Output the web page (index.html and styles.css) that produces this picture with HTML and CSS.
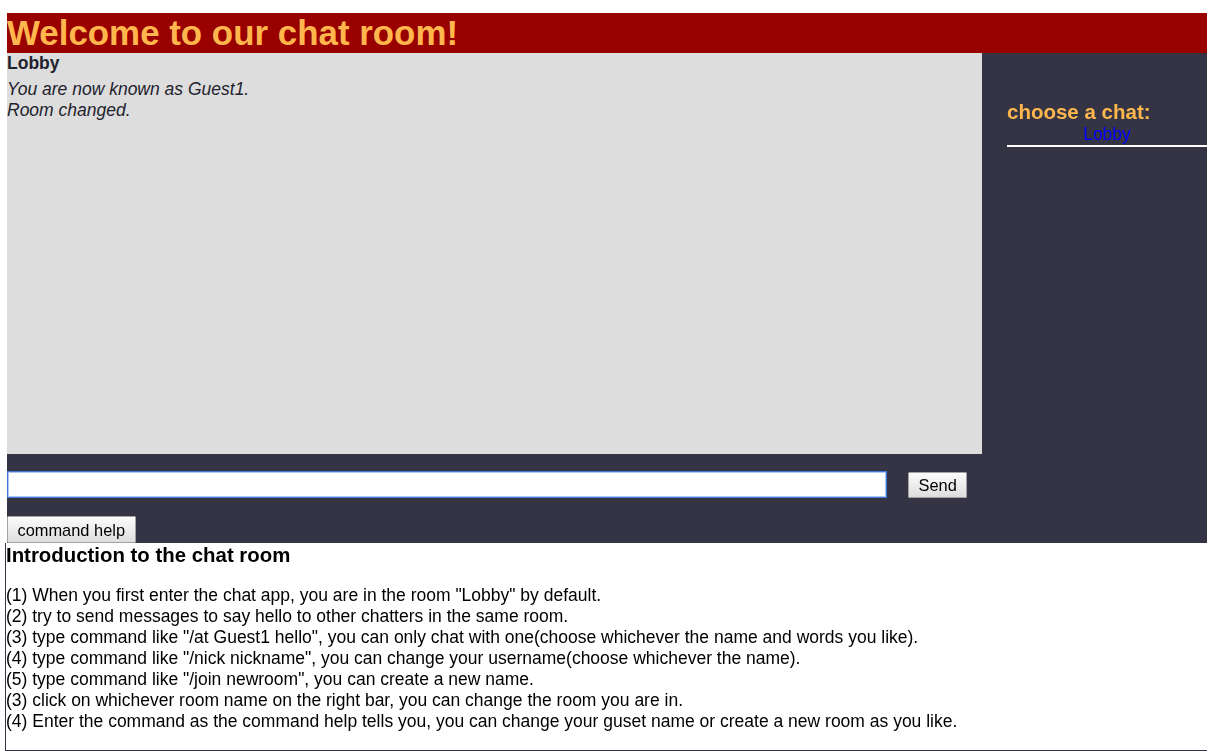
FILE: index.html
```html
<!DOCTYPE html>
<html lang="en">
<head>
<meta charset="utf-8">
<title>Chat room</title>
<link rel="stylesheet" href="styles.css">
</head>
<body>
<div class="page">
  <header class="banner">
    <h1 class="banner-title">Welcome to our chat room!</h1>
  </header>
  <main class="chat">
    <section class="chat-main">
      <div class="room">
        <div class="room-name">Lobby</div>
        <div class="messages">
          <div class="msg system">You are now known as Guest1.</div>
          <div class="msg system">Room changed.</div>
        </div>
      </div>
      <form class="send-form" onsubmit="return false;">
        <div class="send-row">
          <input class="send-input" type="text" autofocus>
          <button class="btn send-btn" type="submit">Send</button>
        </div>
        <button class="btn help-btn" type="button">command help</button>
      </form>
    </section>
    <aside class="sidebar">
      <h3 class="sidebar-title">choose a chat:</h3>
      <div class="room-list">
        <a class="room-link" href="#">Lobby</a>
      </div>
    </aside>
  </main>
  <section class="intro">
    <h3 class="intro-title">Introduction to the chat room</h3>
    <div class="intro-list">
      <div>(1) When you first enter the chat app, you are in the room "Lobby" by default.</div>
      <div>(2) try to send messages to say hello to other chatters in the same room.</div>
      <div>(3) type command like "/at Guest1 hello", you can only chat with one(choose whichever the name and words you like).</div>
      <div>(4) type command like "/nick nickname", you can change your username(choose whichever the name).</div>
      <div>(5) type command like "/join newroom", you can create a new name.</div>
      <div>(3) click on whichever room name on the right bar, you can change the room you are in.</div>
      <div>(4) Enter the command as the command help tells you, you can change your guset name or create a new room as you like.</div>
    </div>
  </section>
</div>
</body>
</html>
```

FILE: styles.css
```css
html, body {
  margin: 0;
  padding: 0;
  overflow: hidden;
  background: #ffffff;
}

body {
  font-family: "Liberation Sans", Arial, sans-serif;
  font-size: 17.5px;
  color: #000;
}

.page {
  margin: 13px 0 0 7px;
  width: 1200px;
}

.banner {
  background: #990000;
  height: 40px;
}

.banner-title {
  margin: 0;
  font-size: 34.9px;
  line-height: 40px;
  font-weight: bold;
  color: #ffb74d;
  white-space: nowrap;
}

.chat {
  display: grid;
  grid-template-columns: 975px 225px;
  background: #353445;
}

.chat-main {
  display: flex;
  flex-direction: column;
}

.room {
  background: #dddddd;
  height: 401px;
  color: #22222e;
}

.room-name {
  font-weight: bold;
  line-height: 21px;
  margin-bottom: 5px;
}

.msg {
  font-style: italic;
  line-height: 21px;
}

.send-form {
  margin: 0;
  padding-top: 17px;
  display: flex;
  flex-direction: column;
  align-items: flex-start;
  gap: 18px;
}

.send-row {
  display: flex;
  align-items: center;
  gap: 21px;
}

.send-input {
  box-sizing: border-box;
  width: 880px;
  height: 27px;
  margin: 0;
  padding: 0 2px;
  border: 1px solid #3f7bd6;
  box-shadow: inset 0 0 0 1px #a9c7f2;
  background: #fff;
  font-family: "Liberation Sans", Arial, sans-serif;
  font-size: 16.5px;
  outline: none;
  caret-color: #000;
}

.btn {
  box-sizing: border-box;
  margin: 0;
  padding: 0 9.5px;
  border: 1px solid #a3a3a3;
  border-radius: 1px;
  background: linear-gradient(#fbfbfb, #dedede);
  font-family: "Liberation Sans", Arial, sans-serif;
  font-size: 16.4px;
  color: #000;
  line-height: 20px;
}

.send-btn {
  height: 26px;
  margin-top: 1px;
}

.help-btn {
  height: 27px;
}

.sidebar {
  padding: 47px 0 0 25px;
}

.sidebar-title {
  margin: 0;
  font-size: 20.5px;
  font-weight: bold;
  color: #ffb74d;
  line-height: 24px;
}

.room-list {
  text-align: center;
  border-bottom: 2px solid #ffffff;
}

.room-link {
  color: #0000ff;
  text-decoration: none;
  line-height: 21px;
}

.intro {
  margin-left: -2px;
  border-left: 1px solid #353445;
  border-bottom: 1px solid #353445;
  padding: 0 0 18px 0;
}

.intro-title {
  margin: 0 0 18px 0;
  font-size: 20.4px;
  font-weight: bold;
  line-height: 24px;
}

.intro-list div {
  line-height: 21px;
  white-space: nowrap;
}
```
